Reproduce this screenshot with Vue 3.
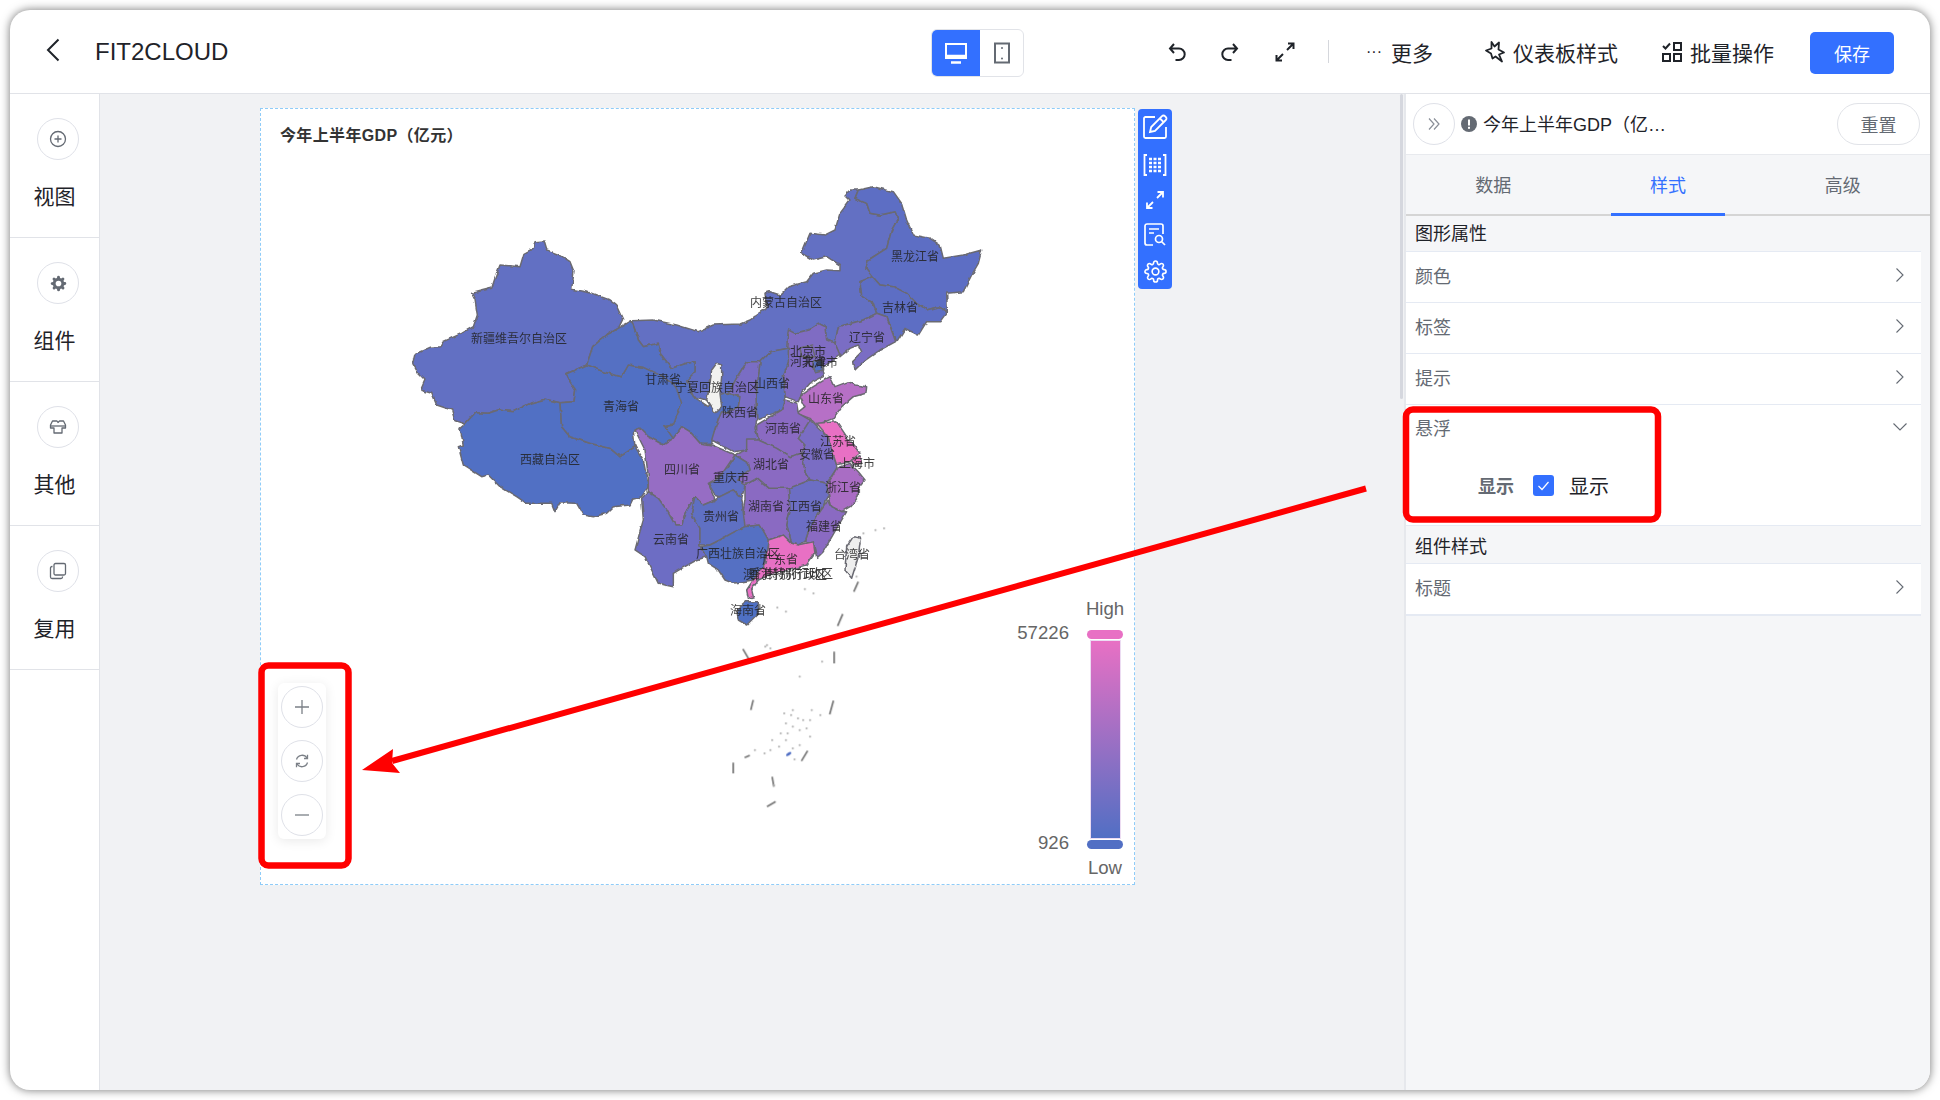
<script setup>
const gearPath = 'M19.4 15a1.65 1.65 0 0 0 .33 1.82l.06.06a2 2 0 0 1 0 2.83 2 2 0 0 1-2.83 0l-.06-.06a1.65 1.65 0 0 0-1.82-.33 1.65 1.65 0 0 0-1 1.51V21a2 2 0 0 1-2 2 2 2 0 0 1-2-2v-.09A1.65 1.65 0 0 0 9 19.4a1.65 1.65 0 0 0-1.82.33l-.06.06a2 2 0 0 1-2.83 0 2 2 0 0 1 0-2.83l.06-.06a1.65 1.65 0 0 0 .33-1.82 1.65 1.65 0 0 0-1.51-1H3a2 2 0 0 1-2-2 2 2 0 0 1 2-2h.09A1.65 1.65 0 0 0 4.6 9a1.65 1.65 0 0 0-.33-1.82l-.06-.06a2 2 0 0 1 0-2.83 2 2 0 0 1 2.83 0l.06.06a1.65 1.65 0 0 0 1.82.33H9a1.65 1.65 0 0 0 1-1.51V3a2 2 0 0 1 2-2 2 2 0 0 1 2 2v.09a1.65 1.65 0 0 0 1 1.51 1.65 1.65 0 0 0 1.82-.33l.06-.06a2 2 0 0 1 2.83 0 2 2 0 0 1 0 2.83l-.06.06a1.65 1.65 0 0 0-.33 1.82V9a1.65 1.65 0 0 0 1.51 1H21a2 2 0 0 1 2 2 2 2 0 0 1-2 2h-.09a1.65 1.65 0 0 0-1.51 1z'

const sideItems = ['视图', '组件', '其他', '复用']
const rowsA = ['颜色', '标签', '提示']

const frames = [
  {
    t: 'translate(400 230) scale(.33333)',
    shapes: [
      { f: '#626fc3', p: '405,35 432,33 440,60 480,75 510,95 522,125 518,155 515,178 570,188 625,208 648,225 668,268 655,295 620,315 578,350 560,405 498,432 510,455 527,480 522,515 480,518 435,508 395,518 340,545 295,540 265,550 225,548 195,582 165,572 155,540 110,525 95,490 62,480 75,450 55,430 38,400 45,372 90,352 120,350 130,335 185,310 220,290 232,255 225,210 215,190 275,175 285,145 300,105 360,110 372,70 400,55' },
      { f: '#516fc4', p: '195,582 225,548 265,550 295,540 340,545 395,518 435,508 480,518 485,590 510,620 570,640 630,655 660,680 705,650 730,690 745,770 725,800 698,808 690,825 640,830 620,850 580,860 550,855 530,820 480,818 465,845 455,820 380,820 350,800 300,770 265,735 245,740 190,705 175,650 190,645 180,595' },
      { f: '#516fc4', p: '498,432 560,405 610,425 665,440 685,405 730,412 790,440 820,460 845,490 855,520 830,585 795,590 820,625 790,645 745,620 720,595 700,605 705,650 660,680 630,655 570,640 510,620 485,590 480,518 522,515 527,480 510,455' },
    ],
  },
  {
    t: 'translate(730 180) scale(.33333)',
    shapes: [
      { f: '#636fc3', p: '-295,422 -230,420 -160,435 -95,455 -50,435 30,432 60,420 110,385 105,340 120,335 150,345 175,320 230,305 250,280 290,270 330,272 330,255 290,230 250,240 215,220 240,160 285,165 315,150 330,100 360,60 345,45 360,30 385,30 375,55 410,70 420,100 450,105 495,95 505,115 485,150 470,205 415,240 408,265 428,290 390,305 395,345 430,370 440,400 400,420 325,440 315,490 290,480 285,440 265,430 235,450 195,460 172,480 175,505 120,515 90,545 50,545 25,585 -5,640 -40,700 -70,660 -110,650 -130,600 -105,575 -105,545 -130,550 -175,565 -210,520 -215,490 -260,500 -275,480' },
      { f: '#5570c3', p: '-295,422 -275,480 -260,500 -215,490 -210,520 -175,565 -130,550 -105,545 -105,575 -130,600 -110,650 -65,680 -45,650 -20,640 30,650 25,680 -5,700 -30,720 -45,750 -55,790 -90,790 -120,755 -145,740 -170,775 -195,740 -170,735 -145,670 -155,640 -170,610 -200,590 -260,562 -305,555 -325,590 -380,575 -430,555 -412,500 -370,465 -335,445' },
      { f: '#5d6ec4', p: '385,30 430,20 490,35 515,70 530,120 550,165 600,175 630,195 640,235 700,225 755,210 745,250 725,285 700,335 650,340 652,395 625,380 590,390 555,365 530,340 490,320 450,315 428,290 408,265 415,240 470,205 485,150 505,115 495,95 450,105 420,100 410,70 375,55' },
      { f: '#5d6ec4', p: '428,290 450,315 490,320 530,340 555,365 590,390 625,380 652,395 630,425 590,425 565,465 525,445 500,485 470,410 440,400 430,370 395,345 390,305' },
      { f: '#7a6dc4', p: '440,400 470,410 497,485 450,510 400,545 375,570 370,540 395,515 385,495 360,505 330,530 315,490 325,440 400,420' },
      { f: '#7f6cc3', p: '175,450 195,460 235,450 265,430 285,440 290,480 315,490 330,525 295,550 275,565 280,590 240,610 215,640 205,665 165,650 160,590 175,545 170,510 172,480' },
      { f: '#7f6cc3', p: '210,505 245,495 255,530 215,530' },
      { f: '#5570c3', p: '248,545 275,540 278,570 255,575' },
      { f: '#5d70c4', p: '90,545 120,515 175,505 175,545 160,590 165,650 155,690 130,700 80,720 78,650' },
      { f: '#7a6dc4', p: '50,545 90,545 78,650 80,720 75,745 85,775 50,810 10,815 -55,780 -40,730 -25,695 -5,700 25,680 30,650 -5,640 25,585' },
      { f: '#b66fc6', p: '210,650 250,620 300,590 315,620 355,605 375,615 410,620 408,640 370,650 335,680 310,715 260,735 240,715 200,700 225,680' },
      { f: '#f2f2f0', p: '-40,550 -25,555 -25,590 -30,640 -25,680 -45,698 -70,660 -60,610 -55,570' },
    ],
  },
  {
    t: 'translate(620 400) scale(.33333)',
    shapes: [
      { f: '#8a6bc2', p: '410,75 485,30 495,0 530,10 535,40 570,60 585,75 535,115 555,135 545,160 510,170 470,145 415,120 410,90' },
      { f: '#7a6dc4', p: '585,75 600,90 625,110 635,150 650,195 650,205 620,250 570,240 555,215 545,160 555,135 535,115 570,60' },
      { f: '#e870c4', p: '590,70 650,65 680,110 720,160 690,185 650,195 635,150 625,110' },
      { f: '#e870c4', p: '695,180 720,170 725,190 700,195' },
      { f: '#a96dc4', p: '650,205 690,190 715,215 735,240 715,265 715,290 690,320 665,335 635,320 625,280 620,255' },
      { f: '#8a6bc2', p: '625,300 635,320 665,335 680,335 650,385 610,455 590,475 580,430 555,425 565,395 590,350' },
      { f: '#6c6ec4', p: '505,265 570,240 620,250 625,290 590,350 565,395 555,425 535,435 515,430 500,375 510,330' },
      { f: '#8a6bc2', p: '375,255 410,235 445,265 505,265 510,330 500,375 515,430 490,405 445,420 420,375 375,380 365,360 375,300' },
      { f: '#8a6bc2', p: '345,165 380,150 380,120 415,120 470,145 510,170 545,160 555,215 570,240 505,265 445,265 410,235 375,255 350,240 390,210 385,190' },
      { f: '#5f6fc3', p: '345,165 385,190 390,210 350,240 375,255 365,295 340,270 300,290 285,285 265,250 300,230' },
      { f: '#966dc4', p: '45,90 60,85 85,110 130,135 160,115 185,80 210,95 240,130 275,135 345,165 300,230 265,250 285,300 250,315 225,290 195,340 185,375 165,375 140,330 115,295 85,275 85,230 75,150' },
      { f: '#6d6dc4', p: '65,295 85,275 115,295 140,330 165,375 185,375 195,340 225,290 215,340 225,360 240,380 240,440 260,470 230,480 185,505 160,520 160,560 135,555 115,550 95,510 75,470 45,450 60,395 70,360' },
      { f: '#5f6fc3', p: '225,290 250,315 285,300 300,290 340,270 365,295 375,380 335,400 300,420 270,435 240,435 240,385 225,360 215,340' },
      { f: '#5570c3', p: '240,440 270,435 300,420 335,400 375,380 420,375 445,420 435,490 400,540 340,550 315,540 295,510 265,490 260,470' },
      { f: '#e870c4', p: '445,420 490,405 515,430 535,435 580,425 585,460 560,495 510,510 460,520 415,540 395,570 400,590 385,595 380,570 400,540 435,490' },
      { f: '#4f70c4', p: '350,630 380,605 415,605 415,640 380,675 355,660' },
      { f: '#eeeeee', p: '700,410 722,415 715,470 695,535 675,510 680,440' },
    ],
  },
]

const labels = [
  ['新疆维吾尔自治区', 519, 339], ['西藏自治区', 550, 460], ['青海省', 621, 407], ['甘肃省', 663, 380],
  ['宁夏回族自治区', 717, 388], ['四川省', 682, 470], ['内蒙古自治区', 786, 303], ['黑龙江省', 915, 257],
  ['吉林省', 900, 308], ['辽宁省', 867, 338], ['北京市', 808, 352], ['河北省', 808, 362], ['天津市', 820, 363],
  ['山西省', 772, 384], ['陕西省', 740, 413], ['山东省', 826, 399], ['河南省', 783, 429], ['江苏省', 838, 442],
  ['安徽省', 817, 455], ['湖北省', 771, 465], ['上海市', 857, 464], ['重庆市', 731, 478], ['浙江省', 843, 488],
  ['湖南省', 766, 507], ['江西省', 804, 507], ['贵州省', 721, 517], ['福建省', 824, 527], ['云南省', 671, 540],
  ['广西壮族自治区', 738, 554], ['广东省', 780, 560], ['台湾省', 852, 555], ['澳门特别行政区', 785, 575],
  ['香港特别行政区', 791, 574], ['海南省', 748, 611],
].map(([t, x, y]) => ({ t, x, y }))

const dashes = [
  [750, 305, 737, 335], [705, 402, 690, 438], [680, 515, 680, 550], [678, 662, 667, 703], [603, 812, 585, 843],
  [387, 848, 387, 880], [445, 660, 438, 690], [415, 507, 432, 537], [510, 965, 485, 980], [500, 890, 505, 920],
  [435, 826, 420, 833],
].map(([x1, y1, x2, y2]) => ({ x1, y1, x2, y2 }))

const dots = [
  [485, 495], [495, 505], [480, 500], [645, 545], [580, 590], [560, 690], [555, 705], [540, 730], [560, 740], [590, 720],
  [610, 720], [640, 705], [580, 750], [610, 770], [500, 780], [540, 780], [520, 800], [478, 820], [450, 810], [560, 805],
  [580, 795], [565, 838], [595, 327], [620, 340], [540, 395], [515, 383], [745, 290], [800, 150], [825, 145], [765, 160],
  [535, 700], [575, 715], [600, 745], [525, 760], [545, 760], [495, 810], [615, 690], [505, 915],
].map(([x, y]) => ({ x, y }))
</script>

<template>
  <div class="page">
    <div class="window">
      <header class="topbar">
        <svg class="back" viewBox="0 0 14 24"><path d="M12.5 1.5 2 12l10.5 10.5" /></svg>
        <div class="name">FIT2CLOUD</div>
        <div class="toggle">
          <div class="toggle-on">
            <svg width="24" height="24" viewBox="0 0 24 24" fill="none" stroke="#fff" stroke-width="2"><rect x="2" y="3" width="20" height="14" /><path d="M2 15.5h20" stroke-width="3.4" /><path d="M7 21.5h10" stroke-width="2.5" /></svg>
          </div>
          <div class="toggle-off">
            <svg width="20" height="24" viewBox="0 0 20 24" fill="none" stroke="#646a73" stroke-width="2"><rect x="3" y="2.5" width="14" height="19" /><circle cx="10" cy="7" r="1" fill="#646a73" stroke="none" /><circle cx="10" cy="17.5" r="1" fill="#646a73" stroke="none" /></svg>
          </div>
        </div>
        <svg class="act act-undo" viewBox="0 0 24 24"><path d="M9 4 5 8.5 9 13M5 8.5h9a5.7 5.7 0 0 1 0 11.4h-3.5" /></svg>
        <svg class="act act-redo" viewBox="0 0 24 24"><path d="M15 4l4 4.500-4 4.500M19 8.500h-9a5.700 5.700 0 0 0 0 11.400h3.500" /></svg>
        <svg class="act act-full" viewBox="0 0 24 24"><path d="M15 3.500h5.500V9M20.500 3.500 14 10M9 20.500H3.500V15M3.500 20.500 10 14" /></svg>
        <div class="divider"></div>
        <div class="action more"><span class="dots">···</span>更多</div>
        <div class="action style-act">
          <svg width="24" height="24" viewBox="0 0 24 24" fill="none" stroke="#1f2329" stroke-width="1.800" stroke-linejoin="round"><path d="M8.500 2 11.500 6.500 16 2.500 15.500 9.500 21 12.500 16 14.500 19 21.500 12.500 16.500 9.500 18.500 8 13.500 3 10.500 8.500 8.500Z" /></svg>
          <span>仪表板样式</span>
        </div>
        <div class="action batch-act">
          <svg width="22" height="22" viewBox="0 0 22 22" fill="none" stroke="#1f2329" stroke-width="2"><path d="M2 5l2.500 2.500L9 2.500" /><rect x="13" y="2" width="7" height="7" /><rect x="2" y="13" width="7" height="7" /><rect x="13" y="13" width="7" height="7" /></svg>
          <span>批量操作</span>
        </div>
        <button class="save">保存</button>
      </header>

      <div class="main">
        <aside class="sidebar">
          <div v-for="(label, i) in sideItems" :key="label" class="side-item">
            <div class="circle side-circle">
              <svg v-if="i === 0" width="18" height="18" viewBox="0 0 18 18" fill="none" stroke="#646a73" stroke-width="1.300"><circle cx="9" cy="9" r="7.500" /><path d="M9 5.500v7M5.500 9h7" /></svg>
              <svg v-else-if="i === 1" width="17" height="17" viewBox="0 0 24 24"><path :d="gearPath" fill="#646a73" /><circle cx="12" cy="12" r="4" fill="#fff" /></svg>
              <svg v-else-if="i === 2" width="18" height="18" viewBox="0 0 18 18" fill="none" stroke="#646a73" stroke-width="1.300" stroke-linejoin="round"><path d="M1.500 7 3.500 3H8l1 1.500L10.500 3h4l2 4v3H13v5H5v-5H1.500Z" /><path d="M1.500 8h15" /></svg>
              <svg v-else width="18" height="18" viewBox="0 0 18 18" fill="none" stroke="#646a73" stroke-width="1.300"><rect x="5" y="1.500" width="11.500" height="11.500" rx="1.500" /><path d="M3.500 4.500H3A1.500 1.500 0 0 0 1.500 6v9A1.500 1.500 0 0 0 3 16.500h9a1.500 1.500 0 0 0 1.500-1.500v-.5" /></svg>
            </div>
            <div class="side-label">{{ label }}</div>
          </div>
        </aside>

        <section class="canvas">
          <div class="scroll-thumb"></div>
          <div class="card">
            <div class="card-title">今年上半年GDP（亿元）</div>
            <svg class="map" viewBox="260 108 874 776">
              <defs>
                <linearGradient id="legendFill" x1="0" y1="0" x2="0" y2="1">
                  <stop offset="0" stop-color="#e870c4" />
                  <stop offset="1" stop-color="#516fc4" />
                </linearGradient>
                <filter id="rough" filterUnits="userSpaceOnUse" x="380" y="160" width="640" height="520">
                  <feTurbulence type="fractalNoise" baseFrequency=".14" numOctaves="2" seed="4" result="n" />
                  <feDisplacementMap in="SourceGraphic" in2="n" scale="3.500" xChannelSelector="R" yChannelSelector="G" result="d" />
                  <feGaussianBlur in="d" stdDeviation=".45" />
                </filter>
              </defs>
              <g filter="url(#rough)">
                <g v-for="(fr, fi) in frames" :key="fi" :transform="fr.t">
                  <polygon v-for="(s, si) in fr.shapes" :key="si" :points="s.p" :fill="s.f" class="prov" />
                </g>
              </g>
              <g class="map-art">
                <g transform="translate(600 480) scale(.3444 .33333)">
                  <line v-for="(d, di) in dashes" :key="di" :x1="d.x1" :y1="d.y1" :x2="d.x2" :y2="d.y2" class="dash" />
                  <circle v-for="(d, di) in dots" :key="di" :cx="d.x" :cy="d.y" r="3" fill="#aaa" />
                  <ellipse cx="548" cy="822" rx="9" ry="4" fill="#516fc4" transform="rotate(-35 548 822)" />
                </g>
                <text v-for="l in labels" :key="l.t" :x="l.x" :y="l.y" class="prov-label">{{ l.t }}</text>
              </g>
              <text x="1105" y="608" class="legend-text mid">High</text>
              <text x="1069" y="632" class="legend-text end">57226</text>
              <rect x="1087" y="630" width="36" height="9" rx="4.500" fill="#e870c4" />
              <rect x="1090.500" y="640.500" width="30" height="198" fill="url(#legendFill)" stroke="#ecdcf2" />
              <rect x="1087" y="840" width="36" height="9" rx="4.500" fill="#516fc4" />
              <text x="1069" y="842" class="legend-text end">926</text>
              <text x="1105" y="867" class="legend-text mid">Low</text>
            </svg>
            <div class="zoom-box">
              <div class="circle">
                <svg width="18" height="18" viewBox="0 0 18 18" fill="none" stroke="#7b8087" stroke-width="1.300"><path d="M9 2v14M2 9h14" /></svg>
              </div>
              <div class="circle">
                <svg width="16" height="16" viewBox="0 0 16 16" fill="none" stroke="#7b8087" stroke-width="1.300"><path d="M2.500 6.500A5.800 5.800 0 0 1 13 5M13.500 9.500A5.800 5.800 0 0 1 3 11" /><path d="M13.500 1.800V5.500H10M2.500 14.200V10.500H6" /></svg>
              </div>
              <div class="circle">
                <svg width="18" height="18" viewBox="0 0 18 18" fill="none" stroke="#7b8087" stroke-width="1.300"><path d="M2 9h14" /></svg>
              </div>
            </div>
            <div class="tools">
              <svg width="26" height="26" viewBox="0 0 26 26" fill="none" stroke="#fff" stroke-width="1.800"><path d="M13 3H3.500A1.500 1.500 0 0 0 2 4.500v18A1.500 1.500 0 0 0 3.500 24h19a1.500 1.500 0 0 0 1.500-1.500V13" /><path d="M8 18l1.200-5L20 2.200a2 2 0 0 1 3 0l.8.800a2 2 0 0 1 0 3L13 17z" /><path d="M18 4.500l3.500 3.500" /></svg>
              <svg width="24" height="24" viewBox="0 0 24 24" fill="none" stroke="#fff" stroke-width="1.800"><path d="M4 2H1.500v20H4M20 2h2.500v20H20" /><path d="M6 6h3M10.500 6h3M15 6h3M6 10h3M10.500 10h3M15 10h3M6 14h3M10.500 14h3M15 14h3M6 18h3M10.500 18h3M15 18h3" stroke-width="2.400" /></svg>
              <svg width="20" height="20" viewBox="0 0 20 20" fill="none" stroke="#fff" stroke-width="1.800"><path d="M12.500 2H18v5.500M18 2l-6 6M2 12.500V18h5.500M2 18l6-6" /></svg>
              <svg width="22" height="24" viewBox="0 0 22 24" fill="none" stroke="#fff" stroke-width="1.700"><path d="M9 22H3a2 2 0 0 1-2-2V3a2 2 0 0 1 2-2h14a2 2 0 0 1 2 2v8" /><path d="M5 6h10M5 10h5" /><circle cx="15" cy="16" r="3.500" /><path d="M17.500 18.500 21 22" /></svg>
              <svg width="23" height="23" viewBox="0 0 24 24" fill="none" stroke="#fff" stroke-width="1.700"><circle cx="12" cy="12" r="3.500" /><path :d="gearPath" /></svg>
            </div>
          </div>
        </section>

        <aside class="panel">
          <div class="panel-head">
            <div class="circle">
              <svg width="14" height="14" viewBox="0 0 14 14" fill="none" stroke="#8a8f98" stroke-width="1.200"><path d="M2 1.500 7 7l-5 5.500M7 1.500 12 7l-5 5.500" /></svg>
            </div>
            <svg class="warn" width="16" height="16" viewBox="0 0 16 16"><circle cx="8" cy="8" r="8" fill="#646a73" /><rect x="7" y="3.500" width="2" height="6" fill="#fff" /><rect x="7" y="10.800" width="2" height="2" fill="#fff" /></svg>
            <div class="panel-title">今年上半年GDP（亿元）</div>
            <button class="reset">重置</button>
          </div>
          <div class="tabs">
            <div class="tab">数据</div>
            <div class="tab active">样式</div>
            <div class="tab">高级</div>
          </div>
          <div class="prop-body">
            <div class="section">图形属性</div>
            <div class="rows rows-first">
              <div v-for="r in rowsA" :key="r" class="row">
                <span>{{ r }}</span>
                <svg class="chev" width="10" height="16" viewBox="0 0 10 16"><path d="M1.500 1.500 8 8l-6.500 6.500" /></svg>
              </div>
              <div class="row-open">
                <div class="row-head">
                  <span>悬浮</span>
                  <svg class="chev" width="16" height="10" viewBox="0 0 16 10"><path d="M1.500 1.500 8 8l6.500-6.500" /></svg>
                </div>
                <div class="check-row">
                  <span class="check-key">显示</span>
                  <span class="checkbox">
                    <svg width="15" height="15" viewBox="0 0 15 15" fill="none" stroke="#fff" stroke-width="1.200"><path d="M2.500 8l3.500 3.500 6.500-7.500" /></svg>
                  </span>
                  <span class="check-label">显示</span>
                </div>
              </div>
            </div>
            <div class="section section-2">组件样式</div>
            <div class="rows rows-last">
              <div class="row row-end">
                <span>标题</span>
                <svg class="chev" width="10" height="16" viewBox="0 0 10 16"><path d="M1.500 1.500 8 8l-6.500 6.500" /></svg>
              </div>
            </div>
          </div>
        </aside>
      </div>
    </div>

    <svg class="overlay" viewBox="0 0 1940 1100">
      <rect x="1406" y="409.500" width="252" height="110" rx="7" fill="none" stroke="#ff0000" stroke-width="6.500" />
      <rect x="261.500" y="665.500" width="87" height="200" rx="7" fill="none" stroke="#ff0000" stroke-width="6.500" />
      <path d="M1366 488.500 392 761" stroke="#ff0000" stroke-width="6" fill="none" />
      <polygon points="362,770 393,749 392,763 400,773" fill="#ff0000" />
    </svg>
  </div>
</template>

<style>
html, body { margin: 0; background: #fff; }
</style>

<style scoped>
.page {
  position: relative;
  width: 1940px;
  height: 1100px;
  box-sizing: border-box;
  padding: 10px;
  font-family: "Liberation Sans", "Noto Sans CJK SC", sans-serif;
  color: #1f2329;
  overflow: hidden;
}
.window {
  width: 1920px;
  height: 1080px;
  background: #fff;
  border-radius: 20px;
  box-shadow: 0 0 10px rgba(0, 0, 0, .55);
  display: flex;
  flex-direction: column;
  overflow: hidden;
}
.topbar {
  flex: 0 0 84px;
  box-sizing: border-box;
  border-bottom: 1px solid #e1e3e8;
  display: flex;
  align-items: center;
  padding-left: 36px;
}
.back { width: 14px; height: 24px; flex: none; fill: none; stroke: #1f2329; stroke-width: 2; margin: 0 35px 3px 0; }
.name { flex: 0 0 836px; font-size: 24px; }
.toggle {
  flex: none;
  width: 93px;
  height: 48px;
  margin-top: 3px;
  box-sizing: border-box;
  border: 1px solid #e1e3e8;
  border-radius: 6px;
  display: flex;
  overflow: hidden;
}
.toggle-on { width: 48px; background: #3370ff; display: flex; align-items: center; justify-content: center; }
.toggle-off { flex: 1; display: flex; align-items: center; justify-content: center; }
.act { width: 24px; height: 24px; flex: none; fill: none; stroke: #1f2329; stroke-width: 2; }
.act-undo { margin-left: 141px; }
.act-redo { margin-left: 29px; }
.act-full { margin-left: 31px; }
.divider { width: 1px; height: 23px; background: #d5d7dc; margin-left: 31px; flex: none; }
.action { display: flex; align-items: center; font-size: 21px; white-space: nowrap; flex: none; }
.more { margin-left: 37px; }
.dots { font-size: 16px; margin-right: 9px; letter-spacing: 0; }
.style-act { margin-left: 50px; gap: 6px; }
.batch-act { margin-left: 43px; gap: 7px; }
.save {
  flex: none;
  margin: 3px 0 0 36px;
  width: 84px;
  height: 42px;
  border: 0;
  border-radius: 5px;
  background: #3370ff;
  color: #fff;
  font: 18px "Liberation Sans", "Noto Sans CJK SC", sans-serif;
}
.main { flex: 1; display: flex; min-height: 0; }
.sidebar { flex: 0 0 90px; box-sizing: border-box; border-right: 1px solid #e1e3e8; }
.side-item {
  height: 144px;
  box-sizing: border-box;
  border-bottom: 1px solid #e1e3e8;
  padding-top: 24px;
  display: flex;
  flex-direction: column;
  align-items: center;
}
.circle {
  flex: none;
  width: 42px;
  height: 42px;
  box-sizing: border-box;
  border: 1px solid #dfe1e8;
  border-radius: 50%;
  background: #fff;
  display: flex;
  align-items: center;
  justify-content: center;
}
.side-circle { margin-left: 7px; }
.side-label { margin-top: 22px; font-size: 21px; line-height: 30px; color: #1f2329; }
.canvas {
  position: relative;
  flex: 1;
  background: #f1f2f4;
  padding: 14px 0 0 160px;
}
.scroll-thumb {
  position: absolute;
  right: 1px;
  top: 0;
  width: 3px;
  height: 305px;
  background: #d5d7de;
  border-radius: 2px;
}
.card {
  position: relative;
  width: 875px;
  height: 777px;
  box-sizing: border-box;
  background: #fff;
  border: 1px dashed #8fccf8;
}
.card-title {
  position: relative;
  padding: 17px 0 0 19px;
  font-size: 16px;
  line-height: 20px;
  font-weight: 700;
  letter-spacing: .35px;
  color: #333;
}
.map { position: absolute; left: -1px; top: -1px; width: 874px; height: 776px; }
.map-art { filter: blur(.45px); }
.prov { stroke: #6a6a72; stroke-width: 4.500; stroke-linejoin: round; }
.dash { stroke: #777; stroke-width: 5; }
.prov-label {
  font-size: 12px;
  fill: #222;
  fill-opacity: .85;
  text-anchor: middle;
  dominant-baseline: central;
}
.legend-text { font-size: 18.600px; fill: #666; dominant-baseline: central; }
.mid { text-anchor: middle; }
.end { text-anchor: end; }
.zoom-box {
  position: absolute;
  left: 17px;
  top: 574px;
  width: 48px;
  height: 156px;
  box-sizing: border-box;
  padding: 3px 0;
  background: #fff;
  border-radius: 6px;
  box-shadow: 0 2px 12px rgba(0, 0, 0, .09);
  display: flex;
  flex-direction: column;
  align-items: center;
  gap: 12px;
}
.tools {
  position: absolute;
  left: 877px;
  top: 0;
  width: 34px;
  height: 180px;
  box-sizing: border-box;
  padding: 5px 0 0;
  background: #3370ff;
  border-radius: 4px;
  display: flex;
  flex-direction: column;
  align-items: center;
  gap: 13px;
}
.panel {
  flex: 0 0 526px;
  box-sizing: border-box;
  border-left: 2px solid #e6e8ec;
  background: #f5f6f8;
  display: flex;
  flex-direction: column;
}
.panel-head {
  flex: 0 0 61px;
  box-sizing: border-box;
  background: #fff;
  border-bottom: 1px solid #e8eaee;
  display: flex;
  align-items: center;
  padding: 0 10px 0 7px;
}
.warn { margin-left: 6px; flex: none; }
.panel-title {
  margin: 0 0 2px 6px;
  width: 184px;
  font-size: 18px;
  color: #1f2329;
  white-space: nowrap;
  overflow: hidden;
  text-overflow: ellipsis;
}
.reset {
  margin-left: auto;
  width: 83px;
  height: 42px;
  box-sizing: border-box;
  border: 1px solid #e1e3e8;
  border-radius: 21px;
  background: #fff;
  color: #646a73;
  font: 18px "Liberation Sans", "Noto Sans CJK SC", sans-serif;
}
.tabs {
  flex: 0 0 61px;
  box-sizing: border-box;
  display: flex;
  border-bottom: 2px solid #d5d5d5;
}
.tab {
  flex: 1;
  position: relative;
  text-align: center;
  font-size: 18px;
  line-height: 63px;
  height: 59px;
  color: #646a73;
}
.tab.active { color: #3370ff; }
.tab.active::after {
  content: "";
  position: absolute;
  left: 30px;
  right: 30px;
  bottom: -2px;
  height: 3px;
  background: #3370ff;
}
.prop-body { flex: 1; padding-right: 9px; }
.section {
  height: 35px;
  box-sizing: border-box;
  padding: 5px 0 0 9px;
  font-size: 18px;
  line-height: 26px;
  color: #1f2329;
}
.section-2 { height: 37px; padding-top: 8px; }
.rows { background: #fff; border-top: 1px solid #e5eaf3; font-size: 18px; color: #646a73; }
.row {
  height: 51px;
  box-sizing: border-box;
  border-bottom: 1px solid #e5eaf3;
  display: flex;
  align-items: center;
  justify-content: space-between;
  padding: 0 16px 4px 9px;
}
.row-end { height: 52px; border-bottom-width: 2px; }
.chev { fill: none; stroke: #646a73; stroke-width: 1.100; flex: none; }
.row-open { height: 121px; box-sizing: border-box; border-bottom: 1px solid #e5eaf3; }
.row-head {
  height: 44px;
  display: flex;
  align-items: center;
  justify-content: space-between;
  padding: 0 13px 0 9px;
}
.check-row {
  display: flex;
  align-items: center;
  height: 30px;
  margin-top: 21px;
  padding-left: 72px;
}
.check-key { font-weight: 700; color: #646a73; }
.checkbox {
  width: 21px;
  height: 21px;
  margin: 0 15px 0 19px;
  border-radius: 3px;
  background: #3370ff;
  display: flex;
  align-items: center;
  justify-content: center;
}
.check-label { font-size: 20px; color: #1f2329; }
.overlay { position: absolute; left: 0; top: 0; width: 1940px; height: 1100px; pointer-events: none; }
</style>
